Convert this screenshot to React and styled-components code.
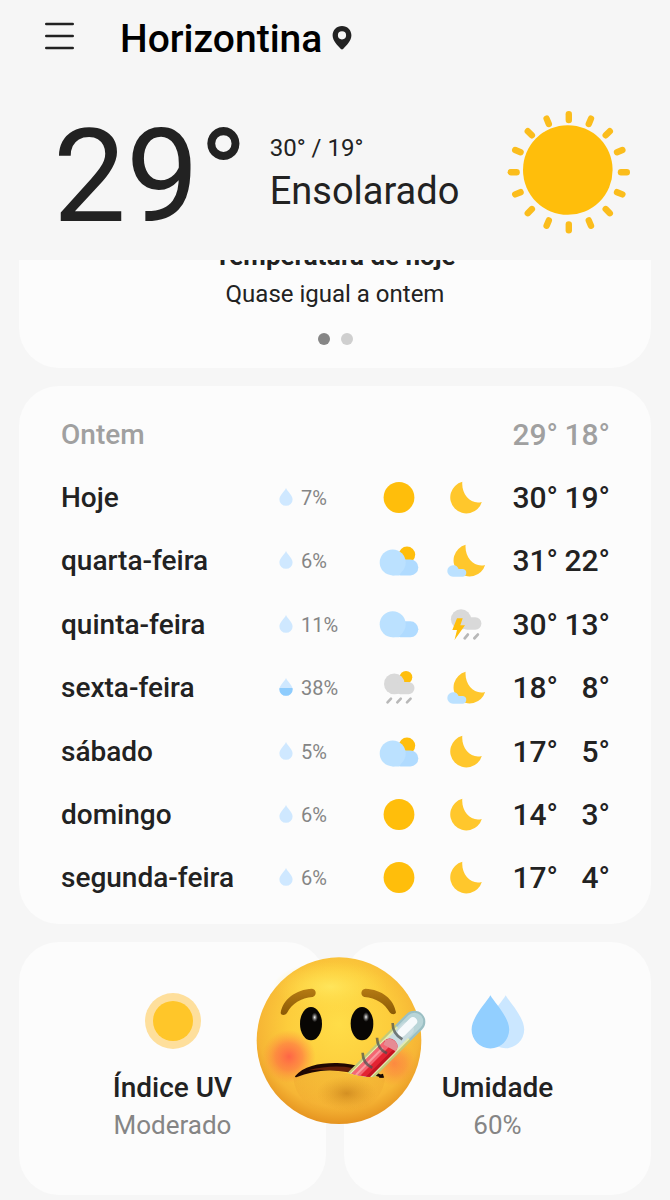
import React from "react";
import styled, { createGlobalStyle } from "styled-components";

const GlobalStyle = createGlobalStyle`
  * { box-sizing: border-box; }
  body {
    margin: 0;
    background: #f6f6f6;
    color: #222;
    font-family: Roboto, "Noto Sans", sans-serif;
  }
  h1, h2, p { margin: 0; font-weight: 400; }
  svg { display: block; flex: none; }
`;

const Header = styled.header`
  position: sticky;
  top: 0;
  z-index: 2;
  background: #f6f6f6;
  padding-bottom: 20px;
`;

const TopBar = styled.div`
  display: flex;
  align-items: center;
  height: 78px;
  padding: 0 44px;
`;

const MenuButton = styled.button`
  border: 0;
  padding: 0;
  margin-right: 45px;
  background: none;
  color: #222;
`;

const City = styled.h1`
  font-size: 39px;
  font-weight: 500;
  line-height: 48px;
  color: #000;
  margin-right: 10px;
`;

const Now = styled.div`
  display: flex;
  align-items: center;
  height: 162px;
  padding: 26px 38px 0 53px;
`;

const CurrentTemp = styled.p`
  font-size: 130px;
  line-height: 128px;
  padding-top: 9px;
  margin-right: 22px;
`;

const Summary = styled.div`
  flex: 1;
  padding-top: 5px;
`;

const Range = styled.p`
  font-size: 24px;
  line-height: 32px;
`;

const Condition = styled.p`
  font-size: 38px;
  line-height: 54px;
`;

const Page = styled.main`
  display: flex;
  flex-direction: column;
  gap: 18px;
  margin-top: -56px;
  padding: 0 19px 5px;
`;

const Card = styled.section`
  background: #fcfcfc;
  border-radius: 40px;
`;

const TodayCard = styled(Card)`
  padding: 36px 20px 23px;
  text-align: center;
`;

const TodayTitle = styled.h2`
  font-size: 26px;
  font-weight: 700;
  line-height: 32px;
  margin-bottom: 4px;
`;

const TodayText = styled.p`
  font-size: 24px;
  line-height: 36px;
`;

const Pager = styled.div`
  display: flex;
  justify-content: center;
  gap: 11px;
  margin-top: 21px;
`;

const PagerDot = styled.button`
  width: 12px;
  height: 12px;
  border: 0;
  padding: 0;
  border-radius: 50%;
  background: ${(p) => (p.$active ? "#868686" : "#cfcfcf")};
`;

const ForecastCard = styled(Card)`
  padding: 17px 41px 14px 42px;
`;

const Forecast = styled.table`
  width: 100%;
  height: 507px;
  table-layout: fixed;
  border-collapse: collapse;

  th, td {
    height: 63px;
    padding: 0;
    white-space: nowrap;
    vertical-align: middle;
  }
`;

const Col = styled.col`
  width: ${(p) => p.$w};
`;

const DayRow = styled.tr`
  color: ${(p) => (p.$past ? "#a0a0a0" : "#222")};
`;

const DayName = styled.th`
  font-size: 28px;
  font-weight: 500;
  line-height: 36px;
  text-align: left;
`;

const Rain = styled.div`
  display: flex;
  align-items: center;
  gap: 8px;
  padding-left: 2px;
  font-size: 20px;
  line-height: 24px;
  color: #858585;
`;

const IconCell = styled.td`
  svg { margin: 0 auto; }
`;

const Degrees = styled.td`
  font-size: 30px;
  font-weight: 500;
  line-height: 36px;
  text-align: right;
`;

const Details = styled.div`
  position: relative;
  display: grid;
  grid-template-columns: 1fr 1fr;
  gap: 18px;
`;

const DetailCard = styled(Card)`
  display: flex;
  flex-direction: column;
  align-items: center;
  padding: 51px 16px;
`;

const DetailTitle = styled.h2`
  font-size: 28px;
  font-weight: 500;
  line-height: 36px;
  margin-top: 21px;
`;

const DetailValue = styled.p`
  font-size: 26px;
  line-height: 38px;
  color: #858585;
`;

const Sticker = styled.div`
  position: absolute;
  top: 13px;
  left: 50%;
  transform: translateX(-50%);
`;

const MenuIcon = () => (
  <svg width="31" height="36" viewBox="0 0 31 36" fill="none" stroke="currentColor" strokeWidth="2.6" strokeLinecap="round" aria-hidden="true">
    <path d="M2.3 3H28.7M2.3 15H28.7M2.3 27H28.7" />
  </svg>
);

const PinIcon = () => (
  <svg width="20" height="26" viewBox="0 0 20 26" aria-hidden="true">
    <path fill="#222" fillRule="evenodd" d="M10 0C4.6 0 0.6 4.1 0.6 9.3C0.6 14.8 5.4 19.3 8.9 23.1Q10 24 11.1 23.1C14.6 19.3 19.4 14.8 19.4 9.3C19.4 4.1 15.4 0 10 0ZM10 5.2A4.1 4.1 0 1 1 10 13.4A4.1 4.1 0 1 1 10 5.2Z" />
  </svg>
);

const rays = Array.from({ length: 16 }, (_, i) => i * 22.5);

const BigSun = () => (
  <svg width="126" height="128" viewBox="0 0 126 128" role="img" aria-label="Sol">
    <circle cx="61.8" cy="62" r="44.8" fill="#ffbe0b" />
    <g stroke="#fbbd1c" strokeWidth="6.4" strokeLinecap="round">
      {rays.map((a) => (
        <path key={a} d="M62.8 12V6.2" transform={`rotate(${a} 62.8 64.2)`} />
      ))}
    </g>
  </svg>
);

const DROP = "M7 0C8 3 13.6 7.2 13.6 11.4A6.6 6.4 0 0 1 0.4 11.4C0.4 7.2 6 3 7 0Z";

const Drop = ({ half }) => (
  <svg width="14" height="20" viewBox="0 0 14 20" aria-hidden="true">
    <path d={DROP} fill="#cfe8ff" />
    {half && <path d="M0.5 10H13.5L13.6 11.4A6.6 6.4 0 0 1 0.4 11.4Z" fill="#8eccfd" />}
  </svg>
);

const Glyph = ({ label, children }) => (
  <svg width="40" height="40" viewBox="0 0 40 40" role="img" aria-label={label}>{children}</svg>
);

const MOON = "M16.3 3.8A16.1 16.1 0 1 0 35.8 23.9C25 27 15.2 16.5 16.3 3.8Z";

const glyphs = {
  sun: (
    <Glyph label="Sol">
      <circle cx="20" cy="19.5" r="15.4" fill="#ffbe0b" />
    </Glyph>
  ),
  moon: (
    <Glyph label="Noite limpa">
      <path d={MOON} fill="#ffc72c" />
    </Glyph>
  ),
  cloudSun: (
    <Glyph label="Parcialmente nublado">
      <circle cx="28" cy="13.8" r="8.2" fill="#ffbe0b" />
      <rect x="13.7" y="18.4" width="25.6" height="16" rx="8" fill="#b0dbff" />
      <circle cx="13.7" cy="21.4" r="13" fill="#bbe1ff" />
      <path d="M13.7 34.4H20L24 29H13.7Z" fill="#bbe1ff" />
    </Glyph>
  ),
  cloudMoon: (
    <Glyph label="Noite com nuvens">
      <path d={MOON} fill="#ffc72c" transform="translate(3.3 0)" />
      <path d="M7 24.3H7.5C10.3 24.3 11.6 26 12.6 28H17A3.9 3.9 0 0 1 17 35.7H7A5.7 5.7 0 0 1 7 24.3Z" fill="#bbe1ff" />
    </Glyph>
  ),
  cloud: (
    <Glyph label="Nublado">
      <rect x="13.7" y="16.3" width="25.6" height="16" rx="8" fill="#b0dbff" />
      <circle cx="13.7" cy="19.3" r="13" fill="#bbe1ff" />
      <path d="M13.7 32.3H20L24 27H13.7Z" fill="#bbe1ff" />
    </Glyph>
  ),
  storm: (
    <Glyph label="Tempestade">
      <circle cx="15" cy="14.3" r="10.1" fill="#d9d9d9" />
      <rect x="15" y="12.3" width="20.4" height="12.4" rx="6.2" fill="#d9d9d9" />
      <path d="M11 13.3H16.7L14.3 20.3H19L8.5 35L11 25H6.3Z" fill="#ffbe0b" />
      <path d="M18.7 33.3L21.8 29.6M28.4 33.3L31.8 29.6" stroke="#b8b8b8" strokeWidth="2.8" strokeLinecap="round" />
    </Glyph>
  ),
  rainSun: (
    <Glyph label="Chuva com sol">
      <circle cx="27" cy="9.2" r="6.3" fill="#ffbe0b" />
      <circle cx="15.3" cy="15.9" r="10.3" fill="#d9d9d9" />
      <rect x="15.3" y="14" width="20.2" height="12.2" rx="6.1" fill="#d9d9d9" />
      <path d="M8.5 34.4L12 30.6M18.3 34.4L21.8 30.6M28 34.4L31.6 30.6" stroke="#b8b8b8" strokeWidth="2.6" strokeLinecap="round" />
    </Glyph>
  ),
};

const UvIcon = () => (
  <svg width="56" height="56" viewBox="0 0 56 56" aria-hidden="true">
    <circle cx="28" cy="28" r="28" fill="#fedf9c" />
    <circle cx="28" cy="28" r="20" fill="#ffc629" />
  </svg>
);

const HumidityIcon = () => (
  <svg width="54" height="56" viewBox="0 0 54 56" aria-hidden="true">
    <path d="M34.7 2.3C39 10 53.2 24 53.2 36.6A18.7 18.7 0 0 1 15.8 36.6C15.8 24 30.4 10 34.7 2.3Z" fill="#cbe7ff" />
    <path d="M19.4 2.3C23.7 10 38.2 24 38.2 36.6A18.8 18.8 0 0 1 0.6 36.6C0.6 24 15.1 10 19.4 2.3Z" fill="#92cfff" />
  </svg>
);

const SickFace = () => (
  <svg width="200" height="170" viewBox="-15 45 600 510" role="img" aria-label="Rosto com termômetro">
    <defs>
      <radialGradient id="skin" cx="0.5" cy="0.4" r="0.62">
        <stop offset="0" stopColor="#ffdd48" />
        <stop offset="0.5" stopColor="#fdcd3c" />
        <stop offset="0.8" stopColor="#f6b535" />
        <stop offset="1" stopColor="#e28d1c" />
      </radialGradient>
      <radialGradient id="shine">
        <stop offset="0" stopColor="#ffea62" stopOpacity="0.8" />
        <stop offset="1" stopColor="#ffe04a" stopOpacity="0" />
      </radialGradient>
      <radialGradient id="blush">
        <stop offset="0" stopColor="#ff5a48" stopOpacity="0.9" />
        <stop offset="0.5" stopColor="#ff6a45" stopOpacity="0.6" />
        <stop offset="1" stopColor="#ff8a3c" stopOpacity="0" />
      </radialGradient>
      <radialGradient id="chin">
        <stop offset="0" stopColor="#bd7415" stopOpacity="0.6" />
        <stop offset="1" stopColor="#d98d22" stopOpacity="0" />
      </radialGradient>
      <radialGradient id="glint">
        <stop offset="0" stopColor="#fff" />
        <stop offset="1" stopColor="#777" stopOpacity="0" />
      </radialGradient>
      <linearGradient id="lower" x1="0" y1="0" x2="0" y2="1">
        <stop offset="0" stopColor="#eda832" stopOpacity="0.5" />
        <stop offset="1" stopColor="#e89a2a" stopOpacity="0" />
      </linearGradient>
      <linearGradient id="brow" x1="0" y1="0" x2="0" y2="1">
        <stop offset="0" stopColor="#b57a13" />
        <stop offset="1" stopColor="#8b5a05" />
      </linearGradient>
      <clipPath id="aboveLip">
        <path d="M0 0H600V380L440 412H400Q350 409 300 390H0Z" />
      </clipPath>
    </defs>

    <ellipse cx="297" cy="302" rx="247" ry="250" fill="url(#skin)" />
    <ellipse cx="270" cy="140" rx="170" ry="75" fill="url(#shine)" />
    <circle cx="147" cy="350" r="80" fill="url(#blush)" />
    <circle cx="462" cy="370" r="68" fill="url(#blush)" opacity="0.6" />
    <path d="M160 412C230 380 300 392 340 406Q390 413 436 408C430 485 370 520 297 520C220 520 165 480 160 412Z" fill="url(#lower)" />
    <ellipse cx="320" cy="460" rx="90" ry="52" fill="url(#chin)" />

    <path d="M122 219C128 178 168 148 216 146C230 147 231 167 218 171C183 174 156 190 141 219C136 227 123 227 122 219Z" fill="url(#brow)" />
    <path d="M468 217C462 178 426 148 376 146C362 147 360 167 373 171C408 174 434 190 449 217C454 225 467 225 468 217Z" fill="url(#brow)" />

    <ellipse cx="213" cy="251" rx="33" ry="50" fill="#080604" />
    <ellipse cx="366" cy="251" rx="34" ry="50" fill="#080604" />
    <ellipse cx="224" cy="232" rx="10" ry="15" fill="url(#glint)" />
    <ellipse cx="378" cy="231" rx="10" ry="15" fill="url(#glint)" />

    <path d="M165 409C190 378 240 368 292 369Q380 374 431 410Q426 415 419 411Q360 391 270 391Q212 394 171 411Q165 413 165 409Z" fill="#1f0703" />
    <path d="M205 391Q275 373 338 384L326 397Q260 386 205 391Z" fill="#652009" />

    <g clipPath="url(#aboveLip)">
      <g transform="translate(523 245) rotate(135)">
        <rect x="-33" y="-33" width="310" height="66" rx="33" fill="#9bbfc3" />
        <rect x="48" y="-33" width="230" height="66" fill="#c5ca72" />
        <rect x="-27" y="-26" width="300" height="52" rx="26" fill="#b9d5d8" />
        <rect x="48" y="-27" width="230" height="54" fill="#e3ebb2" />
        <rect x="10" y="-21" width="270" height="42" rx="21" fill="#c9dce0" />
        <rect x="82" y="-23" width="200" height="46" rx="21" fill="#e32332" />
        <rect x="106" y="0" width="174" height="23" rx="6" fill="#f46672" />
        <rect x="104" y="-23" width="176" height="9" rx="4" fill="#c31422" />
        <path d="M82 -2A22 22 0 0 1 102 -23L114 16L102 23Q82 18 82 -2Z" fill="#e68b94" />
        <rect x="-10" y="-9" width="72" height="25" rx="12" fill="#f6fafc" />
        <rect x="122" y="8" width="140" height="6" rx="3" fill="#f9a9ad" opacity="0.8" />
      </g>
      <g fill="none" stroke="#4a5052" strokeOpacity="0.72" strokeWidth="8">
        <path d="M458 249Q457 280 487 298" />
        <path d="M411 293Q412 327 441 340" />
        <path d="M368 338Q368 370 397 383" />
      </g>
    </g>
    <path d="M419 404L429 401L432 413H417Z" fill="#160702" />
  </svg>
);

const days = [
  { name: "Ontem", hi: 29, lo: 18, past: true },
  { name: "Hoje", rain: 7, day: "sun", night: "moon", hi: 30, lo: 19 },
  { name: "quarta-feira", rain: 6, day: "cloudSun", night: "cloudMoon", hi: 31, lo: 22 },
  { name: "quinta-feira", rain: 11, day: "cloud", night: "storm", hi: 30, lo: 13 },
  { name: "sexta-feira", rain: 38, day: "rainSun", night: "cloudMoon", hi: 18, lo: 8 },
  { name: "sábado", rain: 5, day: "cloudSun", night: "moon", hi: 17, lo: 5 },
  { name: "domingo", rain: 6, day: "sun", night: "moon", hi: 14, lo: 3 },
  { name: "segunda-feira", rain: 6, day: "sun", night: "moon", hi: 17, lo: 4 },
];

export default function App() {
  return (
    <>
      <GlobalStyle />
      <Header>
        <TopBar>
          <MenuButton type="button" aria-label="Menu"><MenuIcon /></MenuButton>
          <City>Horizontina</City>
          <PinIcon />
        </TopBar>
        <Now>
          <CurrentTemp>29°</CurrentTemp>
          <Summary>
            <Range>30° / 19°</Range>
            <Condition>Ensolarado</Condition>
          </Summary>
          <BigSun />
        </Now>
      </Header>
      <Page>
        <TodayCard>
          <TodayTitle>Temperatura de hoje</TodayTitle>
          <TodayText>Quase igual a ontem</TodayText>
          <Pager>
            <PagerDot type="button" aria-label="Página 1" $active />
            <PagerDot type="button" aria-label="Página 2" />
          </Pager>
        </TodayCard>
        <ForecastCard>
          <Forecast>
            <colgroup>
              <Col $w="auto" />
              <Col $w="101px" />
              <Col $w="42px" />
              <Col $w="92px" />
              <Col $w="46px" />
              <Col $w="52px" />
            </colgroup>
            <tbody>
              {days.map((d) => (
                <DayRow key={d.name} $past={d.past}>
                  <DayName scope="row">{d.name}</DayName>
                  <td>{d.rain && <Rain><Drop half={d.rain > 30} />{`${d.rain}%`}</Rain>}</td>
                  <IconCell>{glyphs[d.day]}</IconCell>
                  <IconCell>{glyphs[d.night]}</IconCell>
                  <Degrees>{`${d.hi}°`}</Degrees>
                  <Degrees>{`${d.lo}°`}</Degrees>
                </DayRow>
              ))}
            </tbody>
          </Forecast>
        </ForecastCard>
        <Details>
          <DetailCard>
            <UvIcon />
            <DetailTitle>Índice UV</DetailTitle>
            <DetailValue>Moderado</DetailValue>
          </DetailCard>
          <DetailCard>
            <HumidityIcon />
            <DetailTitle>Umidade</DetailTitle>
            <DetailValue>60%</DetailValue>
          </DetailCard>
          <Sticker><SickFace /></Sticker>
        </Details>
      </Page>
    </>
  );
}
